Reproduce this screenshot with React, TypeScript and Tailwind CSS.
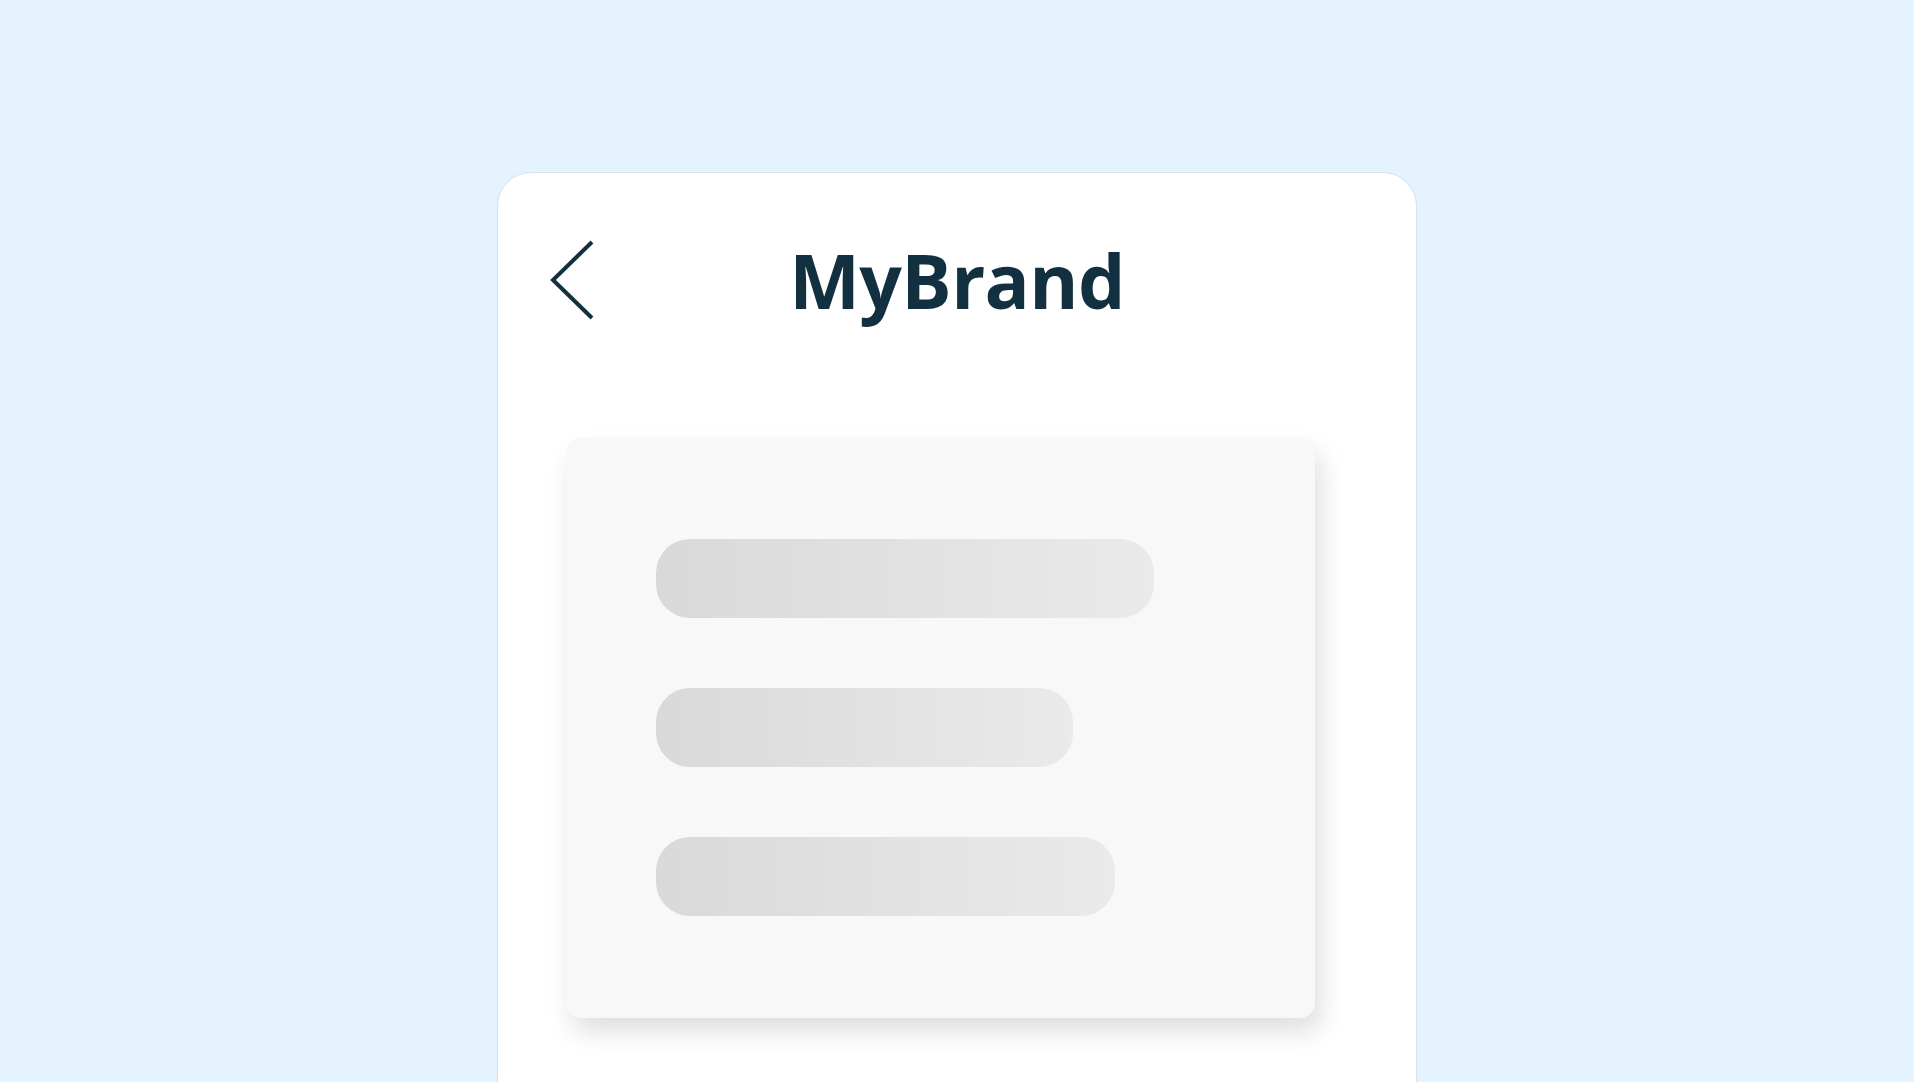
export default function App() {
  const bars = [
    { w: "w-[498px]" },
    { w: "w-[417px]" },
    { w: "w-[459px]" },
  ];

  return (
    <div className="flex h-screen w-full justify-center overflow-hidden bg-[#e5f3fe] pt-[172px] font-['Open_Sans',sans-serif]">
      <div className="h-[960px] w-[920px] shrink-0 rounded-t-[34px] border border-[#d3e2ee] bg-white">
        <div className="mt-[67px] grid h-[78px] grid-cols-[1fr_auto_1fr] items-center">
          <div className="pl-[51px]">
            <svg width="46" height="80" viewBox="0 0 46 80" fill="none" className="block">
              <path d="M43 2 L4 40 L43 78" stroke="#12303f" strokeWidth="4" />
            </svg>
          </div>
          <h1 className="text-[75px] leading-none font-bold tracking-[-0.6px] text-[#12303f]">MyBrand</h1>
          <div />
        </div>

        <div className="mt-[120px] ml-[68px] flex h-[580px] w-[749px] flex-col gap-[70px] rounded-[15px] bg-[#f8f8f8] pt-[101px] pl-[90px] shadow-[6px_14px_26px_rgba(0,0,0,0.13)]">
          {bars.map((b, i) => (
            <div
              key={i}
              className={`h-[79px] ${b.w} rounded-[34px] bg-gradient-to-r from-[#d9d9d9] to-[#eaeaea]`}
            />
          ))}
        </div>
      </div>
    </div>
  );
}
